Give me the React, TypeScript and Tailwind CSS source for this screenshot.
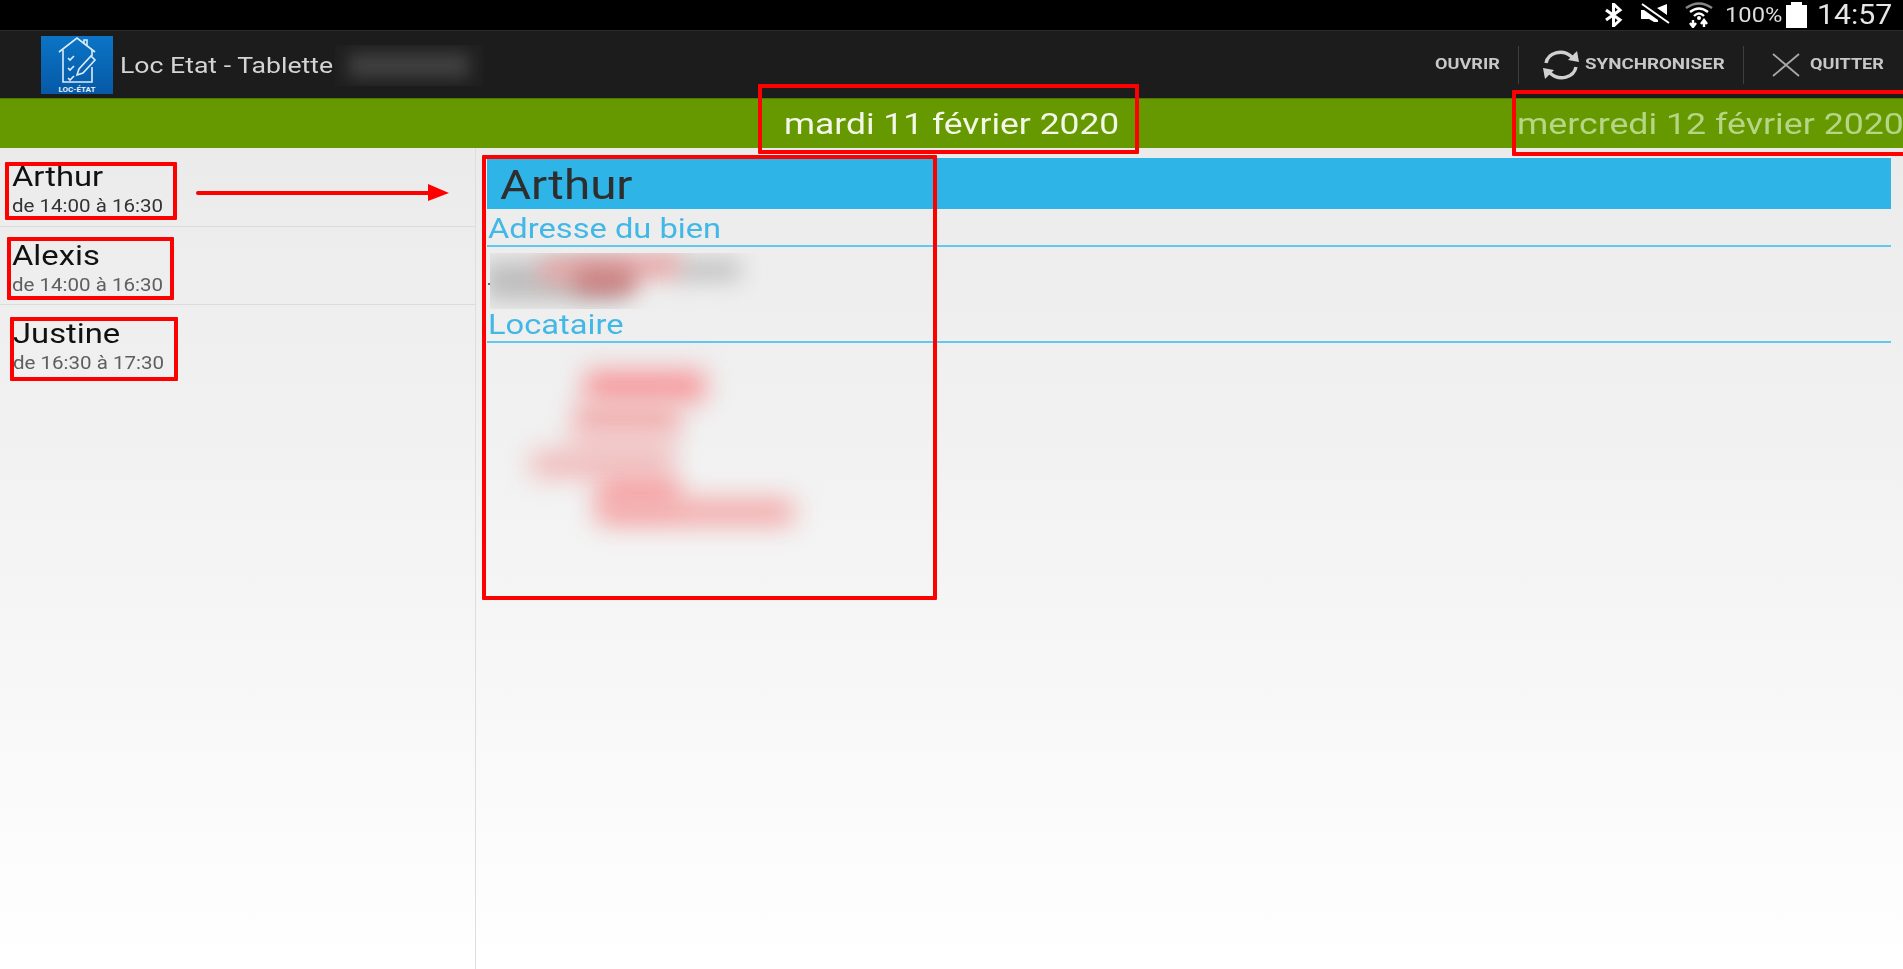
import { Fragment } from "react";

const roboto = "font-['Roboto','Liberation_Sans',sans-serif]";

// the tablet capture is stretched sideways, so text is widened with scale-x
const people = [
  { name: "Arthur", hours: "de 14:00 à 16:30", hoursClass: "text-[#333]", rowClass: "h-[79px] pl-[12px] pt-[15px]" },
  { name: "Alexis", hours: "de 14:00 à 16:30", hoursClass: "text-[#5e5e5e]", rowClass: "h-[78px] pl-[12px] pt-[15px]" },
  { name: "Justine", hours: "de 16:30 à 17:30", hoursClass: "text-[#5e5e5e]", rowClass: "h-[78px] pl-[13px] pt-[15px]" },
];

const Logo = () => (
  <svg width="72" height="58" viewBox="0 0 72 58" className="shrink-0">
    <defs>
      <linearGradient id="logoBg" x1="0" y1="0" x2="0" y2="1">
        <stop offset="0" stopColor="#0b74c6" />
        <stop offset="1" stopColor="#0659a6" />
      </linearGradient>
    </defs>
    <rect width="72" height="58" fill="url(#logoBg)" />
    <g fill="none" stroke="#dcecf8" strokeWidth="1.6">
      <path d="M18 16 L36 2 L54 16 M43 7 V4 h3 v6" />
      <path d="M22 14 V46 H51 V31" />
      <path d="M51 14 V20" />
      <path d="M27 22 l2 2 l4 -4 M27 32 l2 2 l4 -4 M27 42 l2 2 l4 -4" />
      <path d="M36 39 l2 -6 l12 -13 l4 4 l-12 13 z" />
    </g>
    <text x="36" y="56" textAnchor="middle" fontSize="8" fontWeight="700" fill="#e8f2fa" fontFamily="Roboto, sans-serif">
      LOC-ÉTAT
    </text>
  </svg>
);

const StatusIcons = () => (
  <Fragment>
    <svg width="20" height="24" viewBox="0 0 20 24" className="shrink-0">
      <path d="M2 7 L16 17 L9.5 23 V1 L16 7 L2 17" fill="none" stroke="#fff" strokeWidth="3" />
    </svg>
    <svg width="30" height="24" viewBox="0 0 30 24" className="ml-[16px] shrink-0">
      <path d="M27 1 V12 L17 5 Z M1 7 H9 L18 14 V19 L14 19 L9 16 H1 Z" fill="#fff" />
      <path d="M1 3 L29 23" stroke="#000" strokeWidth="3" />
      <path d="M2 1 L29 20" stroke="#fff" strokeWidth="2" />
    </svg>
    <svg width="30" height="26" viewBox="0 0 30 26" className="ml-[14px] shrink-0">
      <path d="M2 6 Q15 -3 28 6" fill="none" stroke="#888" strokeWidth="2.4" />
      <path d="M6 10 Q15 3 24 10" fill="none" stroke="#fff" strokeWidth="2.4" />
      <path d="M10 14 Q15 9 20 14" fill="none" stroke="#fff" strokeWidth="2.4" />
      <circle cx="15" cy="16" r="2" fill="#fff" />
      <path d="M9 18 V24 M6 21 L9 25 L12 21 M20 25 V19 M17 22 L20 18 L23 22" fill="none" stroke="#fff" strokeWidth="2.4" />
    </svg>
  </Fragment>
);

export default function App() {
  return (
    <div className={`relative flex h-[969px] w-full flex-col overflow-hidden ${roboto}`}>
      {/* status bar */}
      <div className="flex h-[30px] items-center justify-end bg-black pr-[11px] text-white">
        <StatusIcons />
        <span className="ml-[11px] w-[55px] origin-left scale-x-[1.13] whitespace-nowrap text-[21px] leading-none text-[#ddd]">100%</span>
        <div className="relative ml-[6px] mt-[3px] h-[23px] w-[21px] bg-white">
          <div className="absolute -top-[3px] left-[5px] h-[3px] w-[11px] bg-white" />
        </div>
        <span className="ml-[10px] w-[75px] origin-left scale-x-[1.12] whitespace-nowrap text-[27px] leading-none text-[#e6e6e6]">14:57</span>
      </div>

      {/* action bar */}
      <div className="flex h-[68px] items-center border-t border-[#2b2b2b] bg-[#1c1c1c] pl-[41px] pr-[19px]">
        <Logo />
        <span className="ml-[7px] mt-[2px] w-[214px] origin-left scale-x-[1.21] whitespace-nowrap text-[22px] text-[#d4d4d4]">Loc Etat - Tablette</span>
        <div className="relative ml-[1px] mt-[1px] h-[41px] w-[148px] overflow-hidden bg-[#1f1f1f]">
          <div className="absolute left-[14px] top-[8px] h-[25px] w-[120px] bg-[#404040] blur-[8px]" />
        </div>
        <div className="ml-auto flex items-center text-[15.5px] font-bold text-[#c8c8c8]">
          <span className="w-[64px] origin-left scale-x-[1.17] whitespace-nowrap">OUVRIR</span>
          <div className="ml-[19px] h-[38px] w-px bg-[#3f3f3f]" />
          <svg width="38" height="32" viewBox="0 0 38 32" className="ml-[23px]">
            <path d="M4 14 C6 4 20 -1 30 8" fill="none" stroke="#d0d0d0" strokeWidth="3.4" />
            <path d="M26 11 L37 13 L35 2 Z" fill="#d0d0d0" />
            <path d="M34 18 C32 28 18 33 8 24" fill="none" stroke="#d0d0d0" strokeWidth="3.4" />
            <path d="M12 21 L1 19 L3 30 Z" fill="#d0d0d0" />
          </svg>
          <span className="ml-[5px] w-[139px] origin-left scale-x-[1.21] whitespace-nowrap">SYNCHRONISER</span>
          <div className="ml-[19px] h-[38px] w-px bg-[#3f3f3f]" />
          <svg width="28" height="24" viewBox="0 0 28 24" className="ml-[28px]">
            <path d="M1 1 L27 23 M27 1 L1 23" stroke="#a8a8a8" strokeWidth="1.8" />
          </svg>
          <span className="ml-[10px] w-[74px] origin-left scale-x-[1.17] whitespace-nowrap">QUITTER</span>
        </div>
      </div>

      {/* date bar */}
      <div className="flex h-[50px] items-center border-t border-[#4f7a00] bg-[#669900] pt-[2px] text-[29.5px]">
        <span className="ml-[784px] w-[333px] origin-left scale-x-[1.2] whitespace-nowrap text-[#f2f7e8]">mardi 11 février 2020</span>
        <span className="ml-auto w-[386px] origin-left scale-x-[1.21] whitespace-nowrap text-[#b6d585]">mercredi 12 février 2020</span>
      </div>

      {/* content */}
      <div className="flex min-h-0 flex-1 bg-gradient-to-b from-[#ebebeb] via-[#f4f4f4] via-50% to-white">
        <div className="w-[476px] shrink-0 border-r border-[#dedede]">
          {people.map((p) => (
            <div key={p.name} className={`border-b border-[#dcdcdc] last:border-b-0 ${p.rowClass}`}>
              <div className="origin-left scale-x-[1.17] whitespace-nowrap text-[28px] leading-[28px] text-[#111]">{p.name}</div>
              <div className={`mt-[3px] origin-left scale-x-[1.14] whitespace-nowrap text-[18px] leading-[24px] ${p.hoursClass}`}>{p.hours}</div>
            </div>
          ))}
        </div>
        <div className="min-w-0 flex-1 pl-[11px] pr-[12px] pt-[10px]">
          <div className="flex h-[51px] items-center bg-[#2fb4e7] pl-[13px] pt-[4px]">
            <span className="origin-left scale-x-[1.19] whitespace-nowrap text-[40px] text-[#2e2e2e]">Arthur</span>
          </div>
          <div className="border-b-2 border-[#62c8ef] pl-px pt-[3px] text-[28px] leading-[33px] text-[#41b8e6]">
            <div className="origin-left scale-x-[1.166] whitespace-nowrap">Adresse du bien</div>
          </div>
          <div className="relative h-[61px]">
            <div className="absolute left-[1px] top-[36px] h-[2px] w-[2px] bg-[#666]" />
            <div className="absolute left-[3px] top-[6px] h-[56px] w-[290px] overflow-hidden">
              <div className="absolute left-[-6px] top-[8px] h-[40px] w-[140px] bg-[#bdbdbd] blur-[12px]" />
              <div className="absolute left-[185px] top-[6px] h-[22px] w-[65px] bg-[#c2c2c2] blur-[11px]" />
              <div className="absolute left-[50px] top-[2px] h-[26px] w-[140px] -rotate-3 bg-[#e6a8a8] blur-[11px]" />
              <div className="absolute left-[85px] top-[16px] h-[24px] w-[60px] bg-[#c97c7c] blur-[11px]" />
            </div>
          </div>
          <div className="border-b-2 border-[#62c8ef] pl-px pt-px text-[28px] leading-[32px] text-[#41b8e6]">
            <div className="origin-left scale-x-[1.166] whitespace-nowrap">Locataire</div>
          </div>
          <div className="relative h-[190px]">
            <div className="absolute left-[98px] top-[28px] h-[30px] w-[120px] bg-[#f79497] blur-[13px]" />
            <div className="absolute left-[88px] top-[62px] h-[30px] w-[104px] bg-[#f2a9a9] blur-[13px]" />
            <div className="absolute left-[44px] top-[108px] h-[26px] w-[140px] bg-[#f1b8b8] blur-[13px]" />
            <div className="absolute left-[86px] top-[90px] h-[24px] w-[96px] bg-[#f2c2c2] blur-[13px]" />
            <div className="absolute left-[112px] top-[136px] h-[28px] w-[80px] bg-[#f79a9c] blur-[13px]" />
            <div className="absolute left-[110px] top-[156px] h-[26px] w-[196px] bg-[#f4a6a6] blur-[13px]" />
          </div>
        </div>
      </div>

      {/* red annotations drawn over the screenshot */}
      <div className="absolute left-[758px] top-[84px] h-[70px] w-[381px] rounded-[1px] border-4 border-[#ff0000]" />
      <div className="absolute left-[1512px] top-[90px] h-[66px] w-[395px] rounded-[1px] border-4 border-[#ff0000]" />
      <div className="absolute left-[5px] top-[162px] h-[58px] w-[172px] rounded-[1px] border-4 border-[#ff0000]" />
      <div className="absolute left-[7px] top-[237px] h-[63px] w-[167px] rounded-[1px] border-4 border-[#ff0000]" />
      <div className="absolute left-[10px] top-[317px] h-[64px] w-[168px] rounded-[1px] border-4 border-[#ff0000]" />
      <div className="absolute left-[482px] top-[155px] h-[445px] w-[455px] rounded-[1px] border-4 border-[#ff0000]" />
      <svg width="256" height="20" viewBox="0 0 256 20" className="absolute left-[196px] top-[183px]">
        <path d="M2 10 H236" stroke="#ff0000" strokeWidth="4" strokeLinecap="round" />
        <path d="M232 1 L253 10 L232 18 Z" fill="#ff0000" />
      </svg>
    </div>
  );
}
